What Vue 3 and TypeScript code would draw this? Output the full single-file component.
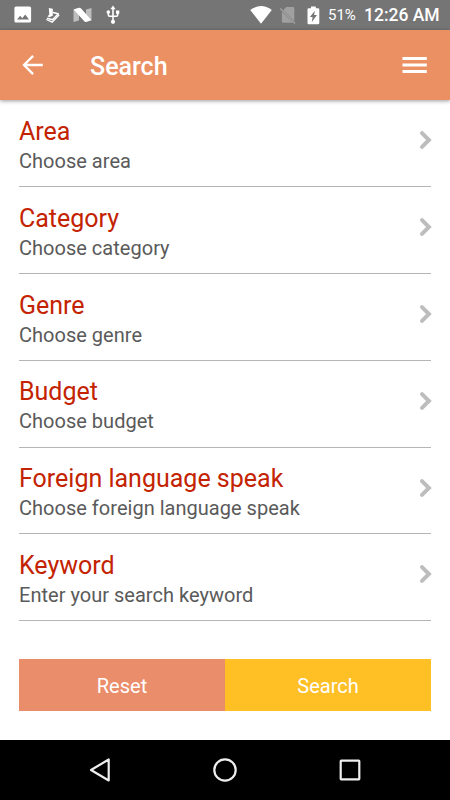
<script setup lang="ts">
interface SearchField {
  title: string
  hint: string
}

const fields: SearchField[] = [
  { title: 'Area', hint: 'Choose area' },
  { title: 'Category', hint: 'Choose category' },
  { title: 'Genre', hint: 'Choose genre' },
  { title: 'Budget', hint: 'Choose budget' },
  { title: 'Foreign language speak', hint: 'Choose foreign language speak' },
  { title: 'Keyword', hint: 'Enter your search keyword' },
]
</script>

<template>
  <div class="screen">
    <div class="status">
      <svg class="st-image" width="18" height="18" viewBox="0 0 18 18">
        <path fill="#fff" fill-rule="evenodd" d="M2 .5h13.500a1.600 1.600 0 0 1 1.600 1.600v12.800a1.600 1.600 0 0 1-1.600 1.600H2a1.600 1.600 0 0 1-1.600-1.600V2.100A1.600 1.600 0 0 1 2 .5ZM3 13.500h12l-3.800-5-2.900 3.700-2.100-2.500Z" />
      </svg>
      <svg class="st-hand" width="15" height="18" viewBox="0 0 15 18">
        <path d="M3.800 2 7.800 2.800V9.700L4.200 11.300 2.600 10.200 4.300 8.600Z" fill="#fff" />
        <path d="M8 6.500 13.300 7.700 7.500 13.700 2 12.200" fill="none" stroke="#fff" stroke-width="1.500" stroke-linejoin="round" />
        <path d="m1.300 13.500 5.900 2.700 7-7.500" fill="none" stroke="#fff" stroke-width="1.300" />
      </svg>
      <svg class="st-n" width="19" height="16" viewBox="0 0 19 16">
        <path d="M.5 2.500 6 1v12.500L.5 15ZM13 2.500 18.500 1v12.500L13 15Z" fill="#bdbdbd" />
        <path d="M.6 2.400 6 .8q1.300-.2 2.100.8L18.300 13l-5.300 1.900q-1 .2-1.700-.6Z" fill="#fff" />
      </svg>
      <svg class="st-usb" width="14" height="20" viewBox="0 0 14 20">
        <path d="M7 3v14M2.300 7v2.800q0 1.500 1.500 1.500h6.400q1.500 0 1.500-1.500V7" fill="none" stroke="#fff" stroke-width="1.600" />
        <path d="M7 .5 9.600 4.200H4.400ZM10 5.400h3.300v3.300H10Z" fill="#fff" />
        <circle cx="2.300" cy="7" r="1.800" fill="#fff" />
        <circle cx="7" cy="16.800" r="2.100" fill="#fff" />
      </svg>
      <div class="status-right">
        <svg class="st-wifi" width="22" height="18" viewBox="0 0 22 18">
          <path d="M.2 4Q11-3.800 21.800 4L11 17.700Z" fill="#fff" />
        </svg>
        <svg class="st-sim" width="18" height="18" viewBox="0 0 18 18">
          <path d="M7.400 1H14q1.300 0 1.300 1.300v13L4.200 4.200ZM2.900 5.700 14 16.800H4.200q-1.300 0-1.300-1.300Z" fill="#a0a0a0" />
          <path d="m1.200 2.600 14.800 14.800" stroke="#a0a0a0" stroke-width="1.400" />
        </svg>
        <svg class="st-battery" width="13" height="19" viewBox="0 0 13 19">
          <path fill="#fff" fill-rule="evenodd" d="M4 .5h4.800v1.700h2.300q1.200 0 1.200 1.200v13.700q0 1.200-1.200 1.200H1.700Q.5 18.300.5 17.100V3.400q0-1.200 1.200-1.200H4ZM7.900 4.800 2.900 11h2.700l-.8 5 5.200-7H7.100Z" />
        </svg>
        <span class="percent">51%</span>
        <span class="clock">12:26 AM</span>
      </div>
    </div>

    <header class="appbar">
      <svg class="back" width="22" height="22" viewBox="0 0 22 22">
        <path d="M20.800 11H2.500M11.100 1.900 2 11l9.100 9.100" fill="none" stroke="#fff" stroke-width="2.300" />
      </svg>
      <h1>Search</h1>
      <svg class="menu" width="26" height="18" viewBox="0 0 26 18">
        <path d="M.5 2.500h24.300M.5 9h24.300M.5 15.500h24.300" stroke="#fff" stroke-width="2.800" />
      </svg>
    </header>

    <main>
      <section v-for="field in fields" :key="field.title" class="row">
        <div>
          <h2>{{ field.title }}</h2>
          <p>{{ field.hint }}</p>
        </div>
        <svg class="chevron" width="14" height="20" viewBox="0 0 14 20">
          <path d="m3 3.200 6.900 6.800L3 16.800" fill="none" stroke="#bdbdbd" stroke-width="4" stroke-linecap="round" />
        </svg>
      </section>
      <div class="actions">
        <button class="reset" type="button">Reset</button>
        <button class="submit" type="button">Search</button>
      </div>
    </main>

    <nav class="navbar">
      <svg width="24" height="26" viewBox="0 0 24 26">
        <path d="M20.700 2.500v21L3 13Z" fill="none" stroke="#eee" stroke-width="2.200" stroke-linejoin="round" />
      </svg>
      <svg width="26" height="26" viewBox="0 0 26 26">
        <circle cx="13" cy="13" r="10.700" fill="none" stroke="#eee" stroke-width="2.200" />
      </svg>
      <svg width="24" height="26" viewBox="0 0 24 26">
        <rect x="2.700" y="3.700" width="18.600" height="18.600" rx=".5" fill="none" stroke="#eee" stroke-width="2.200" />
      </svg>
    </nav>
  </div>
</template>

<style>
body {
  margin: 0;
}
</style>

<style scoped>
.screen {
  display: flex;
  flex-direction: column;
  width: 450px;
  height: 800px;
  overflow: hidden;
  background: #fff;
  font-family: Roboto, sans-serif;
}
svg {
  display: block;
  flex: none;
}
h1,
h2,
p {
  margin: 0;
  font-weight: 400;
  white-space: nowrap;
}
.status {
  display: flex;
  flex: none;
  box-sizing: border-box;
  height: 30px;
  padding: 0 10px 0 14px;
  align-items: center;
  background: #757575;
  color: #fff;
}
.st-hand {
  margin-left: 13px;
}
.st-n {
  margin-left: 13px;
}
.st-usb {
  margin-left: 14px;
}
.status-right {
  display: flex;
  align-items: center;
  margin-left: auto;
}
.st-sim {
  margin-left: 7px;
}
.st-battery {
  margin-left: 10px;
}
.percent {
  width: 28px;
  margin-left: 8.5px;
  font-size: 15px;
  line-height: 32px;
}
.clock {
  width: 76px;
  margin-left: 8px;
  font-size: 17.5px;
  font-weight: 500;
  line-height: 34px;
  white-space: nowrap;
}
.appbar {
  display: flex;
  position: relative;
  flex: none;
  box-sizing: border-box;
  height: 70px;
  padding: 0 22px;
  align-items: center;
  background: #eb9063;
  color: #fff;
  box-shadow: 0 1px 4px rgba(0, 0, 0, 0.4);
}
h1 {
  margin-left: 46px;
  padding-top: 4px;
  font-size: 25px;
  font-weight: 500;
  line-height: 30px;
}
.menu {
  margin-left: auto;
}
main {
  flex: 1;
  padding: 0 19px;
}
.row {
  display: flex;
  box-sizing: border-box;
  height: 86.875px;
  padding-top: 16.8px;
  justify-content: space-between;
  border-bottom: 1px solid #b5b5b5;
}
h2 {
  color: #c32300;
  font-size: 25px;
  line-height: 30px;
}
p {
  margin-top: 2px;
  color: #5a5a5a;
  font-size: 20px;
  letter-spacing: 0.02px;
  line-height: 25px;
}
.chevron {
  margin: 13.3px -2px 0 0;
}
.actions {
  display: flex;
  height: 52px;
  margin-top: 37.5px;
}
button {
  flex: 1;
  padding: 2px 0 0;
  border: 0;
  color: #fff;
  font: 400 20px/24px Roboto, sans-serif;
}
.reset {
  background: #ea8d6b;
}
.submit {
  background: #ffc026;
}
.navbar {
  display: flex;
  flex: none;
  box-sizing: border-box;
  height: 60px;
  padding: 0 88px;
  align-items: center;
  justify-content: space-between;
  background: #000;
}
</style>
